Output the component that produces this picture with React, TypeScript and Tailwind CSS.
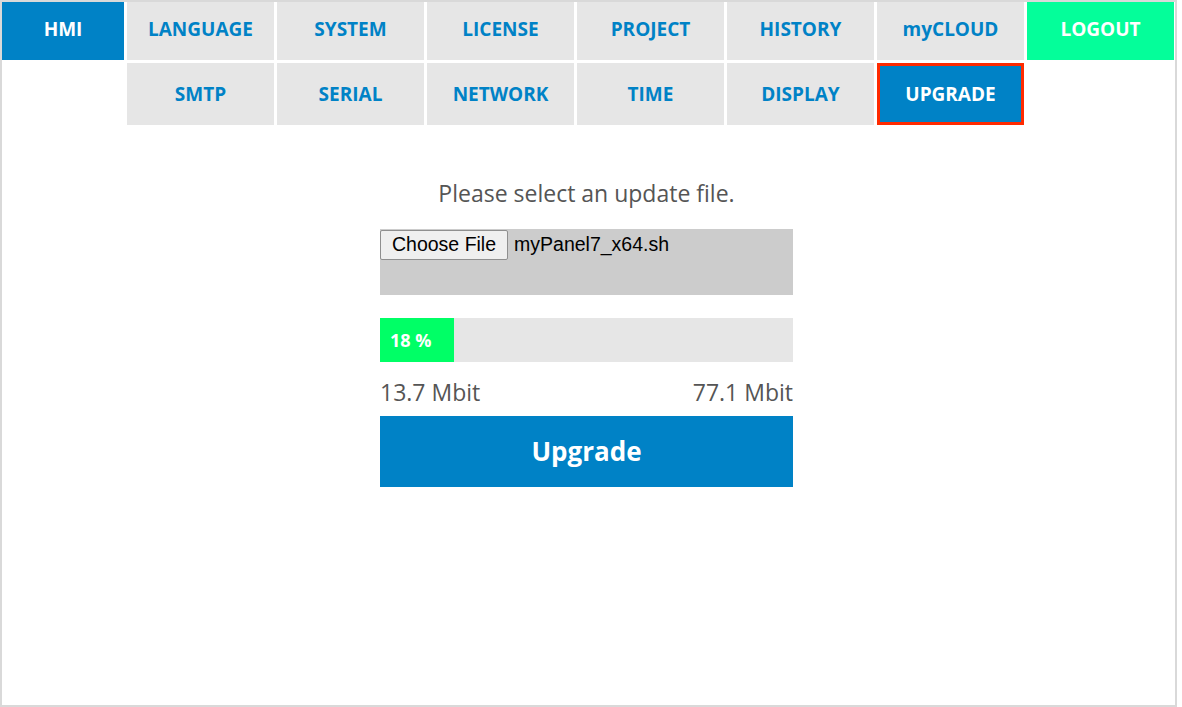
import React from 'react';

const topTabs = ['LANGUAGE', 'SYSTEM', 'LICENSE', 'PROJECT', 'HISTORY', 'myCLOUD'];
const subTabs = ['SMTP', 'SERIAL', 'NETWORK', 'TIME', 'DISPLAY'];

const font = { fontFamily: '"Open Sans", "Noto Sans", sans-serif' };

const Tab = ({ label, raised }: { label: string; raised?: boolean }) => (
  <div
    className={`w-[147px] h-full bg-[#e6e6e6] flex items-center justify-center text-[19px] font-bold text-[#0082c6] ${
      raised ? 'pb-[3px]' : 'pt-[1px]'
    }`}
  >
    {label}
  </div>
);

const App = () => {
  const percent = 18;

  return (
    <div className="w-[1177px] h-[707px] border-2 border-[#d9d9d9] bg-white" style={font}>
      <nav>
        <div className="flex gap-[3px] h-[58px]">
          <div className="w-[122px] h-full bg-[#0082c6] flex items-center justify-center pb-[3px] text-[19px] font-bold text-white">
            HMI
          </div>
          {topTabs.map((t) => (
            <Tab key={t} label={t} raised />
          ))}
          <div className="w-[147px] h-full bg-[#04fe9a] flex items-center justify-center pb-[3px] text-[19px] font-bold text-white">
            LOGOUT
          </div>
        </div>
        <div className="flex gap-[3px] h-[62px] mt-[3px] ml-[125px]">
          {subTabs.map((t) => (
            <Tab key={t} label={t} />
          ))}
          <div className="w-[147px] h-full bg-[#0082c6] border-[3px] border-[#ff2a00] flex items-center justify-center pt-[1px] text-[19px] font-bold text-white">
            UPGRADE
          </div>
        </div>
      </nav>

      <main className="w-[413px] ml-[378px] mt-[54px]">
        <p className="text-center text-[23px] text-[#555555] leading-[28px]">Please select an update file.</p>

        <div className="mt-[22px] h-[66px] bg-[#cccccc] flex items-start" style={{ fontFamily: '"Liberation Sans", Arial, sans-serif' }}>
          <button className="mt-[1px] h-[30px] px-[11px] bg-[#efefef] border border-[#8f8f8f] rounded-[2px] text-[19.5px] text-black leading-none">
            Choose File
          </button>
          <span className="ml-[6px] mt-[3px] text-[19.5px] text-black leading-[24px]">myPanel7_x64.sh</span>
        </div>

        <div className="mt-[23px] h-[44px] bg-[#e6e6e6] flex">
          <div
            className="h-full bg-[#00ff66] flex items-center pl-[10px] text-[18px] font-bold text-white"
            style={{ width: `${percent}%` }}
          >
            {percent} %
          </div>
        </div>

        <div className="mt-[16px] flex justify-between text-[23px] text-[#555555] leading-[28px]">
          <span>13.7 Mbit</span>
          <span>77.1 Mbit</span>
        </div>

        <button className="mt-[10px] w-full h-[71px] bg-[#0082c6] text-white text-[26px] font-bold">
          Upgrade
        </button>
      </main>
    </div>
  );
};

export default App;
